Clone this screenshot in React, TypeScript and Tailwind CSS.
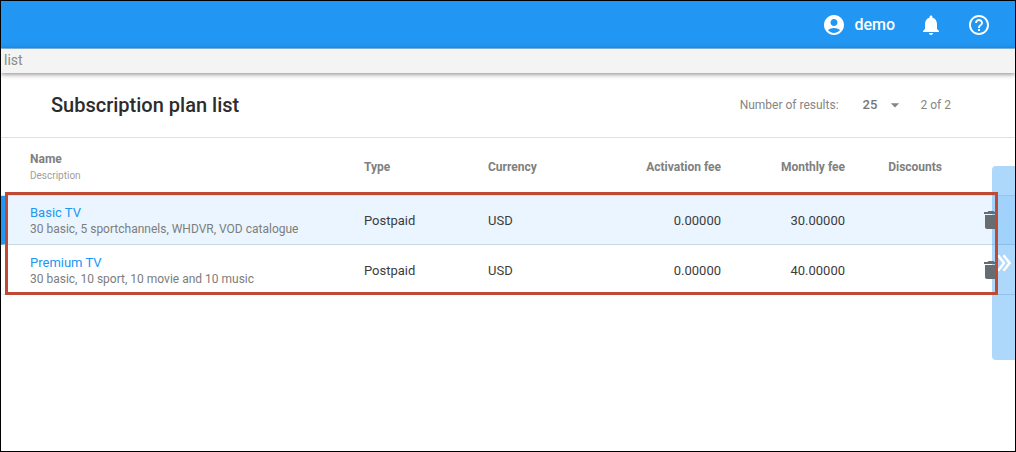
import React from "react";
import { MdAccountCircle, MdArrowDropDown, MdDelete, MdHelpOutline, MdNotifications } from "react-icons/md";

type Plan = {
  name: string;
  description: string;
  type: string;
  currency: string;
  activationFee: string;
  monthlyFee: string;
  discounts: string;
  selected: boolean;
};

const plans: Plan[] = [
  {
    name: "Basic TV",
    description: "30 basic, 5 sportchannels, WHDVR, VOD catalogue",
    type: "Postpaid",
    currency: "USD",
    activationFee: "0.00000",
    monthlyFee: "30.00000",
    discounts: "",
    selected: true,
  },
  {
    name: "Premium TV",
    description: "30 basic, 10 sport, 10 movie and 10 music",
    type: "Postpaid",
    currency: "USD",
    activationFee: "0.00000",
    monthlyFee: "40.00000",
    discounts: "",
    selected: false,
  },
];

function TopBar() {
  return (
    <header className="flex h-12 items-center justify-end gap-6 border-b border-[#90caf9] bg-[#2196f3] pr-6 text-white">
      <button type="button" className="flex items-center gap-2 text-base leading-6 font-medium">
        <MdAccountCircle className="size-6" />
        demo
      </button>
      <button type="button" aria-label="Notifications">
        <MdNotifications className="size-6" />
      </button>
      <button type="button" aria-label="Help">
        <MdHelpOutline className="size-6" />
      </button>
    </header>
  );
}

function ListHeader() {
  return (
    <div className="flex h-[65px] items-center justify-between border-b border-[#e0e0e0] pr-16 pl-[50px]">
      <h1 className="text-xl leading-6 font-medium text-[#2c2c2c]">Subscription plan list</h1>
      <div className="flex items-center text-xs leading-4 text-[#858585]">
        <label htmlFor="page-size">Number of results:</label>
        <div className="relative ml-6 flex items-center">
          <select
            id="page-size"
            defaultValue="25"
            className="w-[42px] appearance-none bg-transparent text-[13px] font-medium text-[#757575] outline-none"
          >
            <option>25</option>
            <option>50</option>
            <option>100</option>
          </select>
          <MdArrowDropDown className="pointer-events-none absolute right-0 size-5" />
        </div>
        <span className="ml-4">2 of 2</span>
      </div>
    </div>
  );
}

function PlanRow({ plan }: { plan: Plan }) {
  return (
    <tr
      className={
        plan.selected
          ? "h-[49px] bg-[#eaf5ff] [&>td]:border-b [&>td]:border-b-[#c8d7e4]"
          : "h-[50px] bg-white [&>td]:border-b [&>td]:border-b-[#d3dde6]"
      }
    >
      <td
        className={
          plan.selected
            ? "border-l-4 border-l-[#2196f3] pt-0.5 pl-[25px]"
            : "border-l-4 border-l-transparent pt-0.5 pl-[25px]"
        }
      >
        <a href="#plan" className="block text-[13px] leading-4 text-[#2196f3]">
          {plan.name}
        </a>
        <div className="text-xs leading-4 text-[#7d7d7d]">{plan.description}</div>
      </td>
      <td className="pt-0.5">{plan.type}</td>
      <td className="pt-0.5">{plan.currency}</td>
      <td className="pt-0.5 text-right">{plan.activationFee}</td>
      <td className="pt-0.5 text-right">{plan.monthlyFee}</td>
      <td className="pt-0.5 text-right">{plan.discounts}</td>
      <td className="pr-3">
        <button
          type="button"
          aria-label={"Delete " + plan.name}
          className="relative z-20 ml-auto block text-[#666c70]"
        >
          <MdDelete className="size-6" />
        </button>
      </td>
    </tr>
  );
}

function PlanTable() {
  return (
    <div className="relative">
      <table className="w-full table-fixed border-separate border-spacing-0 text-left text-[13px] leading-4 text-[#3c3c3c]">
        <colgroup>
          <col />
          <col className="w-[124px]" />
          <col className="w-[108px]" />
          <col className="w-[125px]" />
          <col className="w-[124px]" />
          <col className="w-[97px]" />
          <col className="w-[73px]" />
        </colgroup>
        <thead>
          <tr className="h-[58px] text-xs text-[#808080] [&>th]:border-b [&>th]:border-[#e0e0e0] [&>th]:font-bold">
            <th className="pl-[29px]">
              <div>Name</div>
              <div className="mt-0.5 text-[10px] font-normal text-[#9e9e9e]">Description</div>
            </th>
            <th>Type</th>
            <th>Currency</th>
            <th className="text-right">Activation fee</th>
            <th className="text-right">Monthly fee</th>
            <th className="text-right">Discounts</th>
            <th aria-label="Actions" />
          </tr>
        </thead>
        <tbody>
          {plans.map((plan) => (
            <PlanRow key={plan.name} plan={plan} />
          ))}
        </tbody>
      </table>
      <div className="pointer-events-none absolute top-[54px] right-[17px] bottom-0 left-1 z-30 border-3 border-[#bf4a34]" />
      <button
        type="button"
        aria-label="Expand panel"
        className="absolute top-7 right-0 z-10 flex h-[194px] w-[23px] items-center justify-center rounded-l bg-[#2196f3]/37 text-white"
      >
        <svg viewBox="0 0 14 18" className="h-[18px] w-3.5" fill="none" stroke="currentColor" strokeWidth="2.6">
          <path d="M1 1.2 7 9l-6 7.8M6.5 1.2l6 7.8-6 7.8" />
        </svg>
      </button>
    </div>
  );
}

export default function App() {
  return (
    <div className="min-h-screen border border-black bg-white font-[Roboto,sans-serif]">
      <TopBar />
      <nav
        aria-label="Breadcrumb"
        className="relative flex h-6 items-center bg-[#f4f4f4] pb-0.5 pl-[3px] text-sm text-[#8a8a8a] shadow-[0_1px_5px_rgba(0,0,0,0.5)]"
      >
        list
      </nav>
      <main>
        <ListHeader />
        <PlanTable />
      </main>
    </div>
  );
}
